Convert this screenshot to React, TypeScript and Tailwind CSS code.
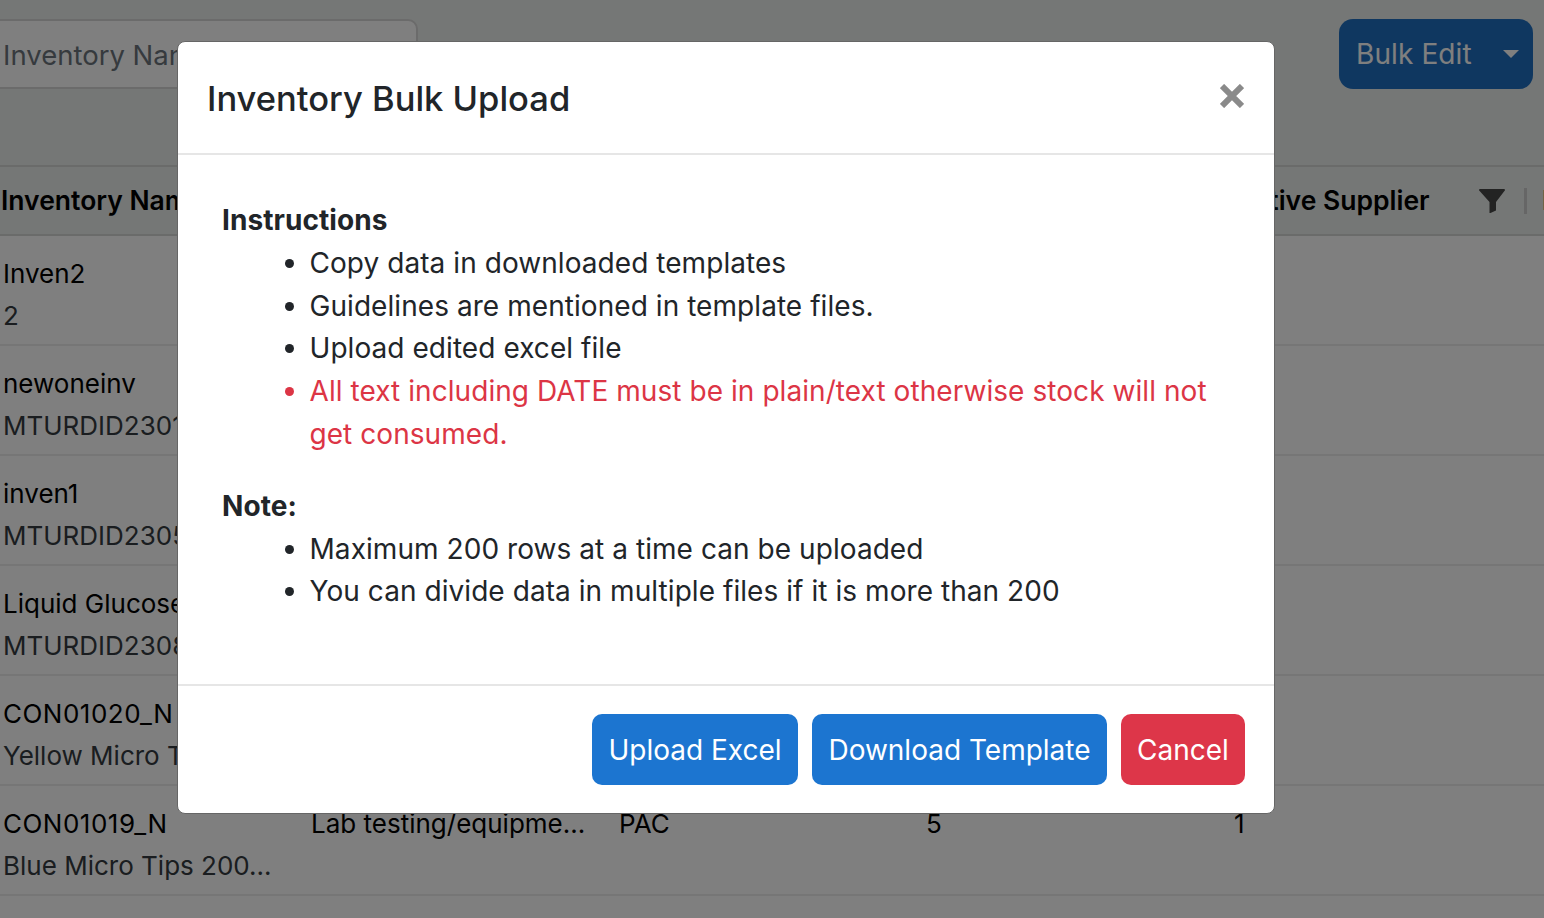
import React from "react";

const rows = [
  ["Inven2", "2", "", "", "", ""],
  ["newoneinv", "MTURDID2301", "", "", "", ""],
  ["inven1", "MTURDID2305", "", "", "", ""],
  ["Liquid Glucose", "MTURDID2308", "", "", "", ""],
  ["CON01020_N", "Yellow Micro Tips 200...", "", "", "", ""],
  ["CON01019_N", "Blue Micro Tips 200...", "Lab testing/equipme...", "PAC", "5", "1"],
];

function Funnel() {
  return (
    <svg viewBox="0 0 26 24" className="w-[26px] h-[24px] shrink-0" fill="#474747">
      <path d="M1 0h24a1 1 0 0 1 .8 1.6L17 13v8.500l-5.500 2.500h-1V13L.2 1.600A1 1 0 0 1 1 0z" />
    </svg>
  );
}

export default function App() {
  return (
    <div className="relative h-[918px] w-[1544px] overflow-hidden bg-white text-[28px] font-['Inter','Liberation_Sans',sans-serif]">
      {/* page below the backdrop */}
      <div className="h-[165px] bg-[#ebeeec] flex items-start justify-between pt-[19px] pr-[11px]">
        <div className="w-[428px] h-[70px] -ml-[10px] bg-white border-2 border-[#d6d6d6] rounded-[10px] flex items-center pl-[11px] pt-[3px] text-[#6c757d] text-[27.500px]">
          Inventory Name
        </div>
        <div className="w-[194px] h-[70px] bg-[#1f6fc0] rounded-[14px] flex items-center justify-between pl-[17px] pr-[14px] text-white">
          <span className="tracking-[0.1px]">Bulk Edit</span>
          <span className="w-0 h-0 border-x-[8px] border-x-transparent border-t-[8px] border-t-white" />
        </div>
      </div>
      <div className="h-[71px] bg-[#ebeeec] border-y-2 border-[#d4d6d5] flex items-center pl-[1px] text-[26.500px] font-semibold text-black overflow-hidden">
        <span className="w-[1234px] shrink-0 whitespace-nowrap">Inventory Name</span>
        <span className="flex items-center shrink-0">
          <span className="w-[244px] shrink-0 whitespace-nowrap">Active Supplier</span>
          <Funnel />
          <span className="ml-[19px] w-[3px] h-[26px] shrink-0 bg-[#cccccc]" />
          <span className="ml-[15px] shrink-0">I</span>
        </span>
      </div>
      {rows.map((r) => (
        <div
          key={r[0]}
          className="h-[110px] border-b-2 border-[#ececec] grid grid-cols-[307px_309px_295px_40px_1fr] pl-[3px] pt-[17px] text-[26px] leading-[42px] text-black whitespace-nowrap"
        >
          <div>
            <div className={r[0].startsWith("CON") ? "tracking-[0.5px]" : ""}>{r[0]}</div>
            <div className="text-[#343a40]">{r[1]}</div>
          </div>
          <div className="pl-[1px]">{r[2]}</div>
          <div>{r[3]}</div>
          <div className="text-center">{r[4]}</div>
          <div className="pl-[280px]">{r[5]}</div>
        </div>
      ))}

      {/* backdrop */}
      <div className="absolute inset-0 bg-black/50" />

      {/* modal */}
      <div className="absolute left-[177px] top-[41px] w-[1098px] h-[773px] bg-white border border-[#666666] rounded-[8px] flex flex-col text-[#212529]">
        <div className="h-[113px] border-b-2 border-[#e6e6e6] flex items-start justify-between pl-[29px] pr-[30px] pt-[33px]">
          <h5 className="text-[34.500px] leading-[48px] font-medium">Inventory Bulk Upload</h5>
          <svg viewBox="0 0 24 24" className="w-[24px] h-[24px] mt-[9px]" fill="none" stroke="#8a8a8a" strokeWidth="6">
            <path d="M2 2l20 20M22 2L2 22" />
          </svg>
        </div>
        <div className="flex-1 pl-[44px] pr-[60px] pt-[44px] leading-[42.750px] tracking-[0.060px]">
          <div className="font-bold">Instructions</div>
          <ul className="list-disc pl-[87.500px]">
            <li>Copy data in downloaded templates</li>
            <li>Guidelines are mentioned in template files.</li>
            <li>Upload edited excel file</li>
            <li className="text-[#dc3545]">All text including DATE must be in plain/text otherwise stock will not get consumed.</li>
          </ul>
          <div className="font-bold mt-[29px]">Note:</div>
          <ul className="list-disc pl-[87.500px] mt-[0.400px]">
            <li>Maximum 200 rows at a time can be uploaded</li>
            <li>You can divide data in multiple files if it is more than 200</li>
          </ul>
        </div>
        <div className="h-[129px] border-t-2 border-[#e6e6e6] flex justify-end gap-[14px] pt-[28px] pr-[29px]">
          <button className="h-[71px] w-[206px] rounded-[10px] bg-[#1c75d0] text-white">Upload Excel</button>
          <button className="h-[71px] w-[295px] rounded-[10px] bg-[#1c75d0] text-white">Download Template</button>
          <button className="h-[71px] w-[124px] rounded-[10px] bg-[#dd3649] text-white">Cancel</button>
        </div>
      </div>
    </div>
  );
}
